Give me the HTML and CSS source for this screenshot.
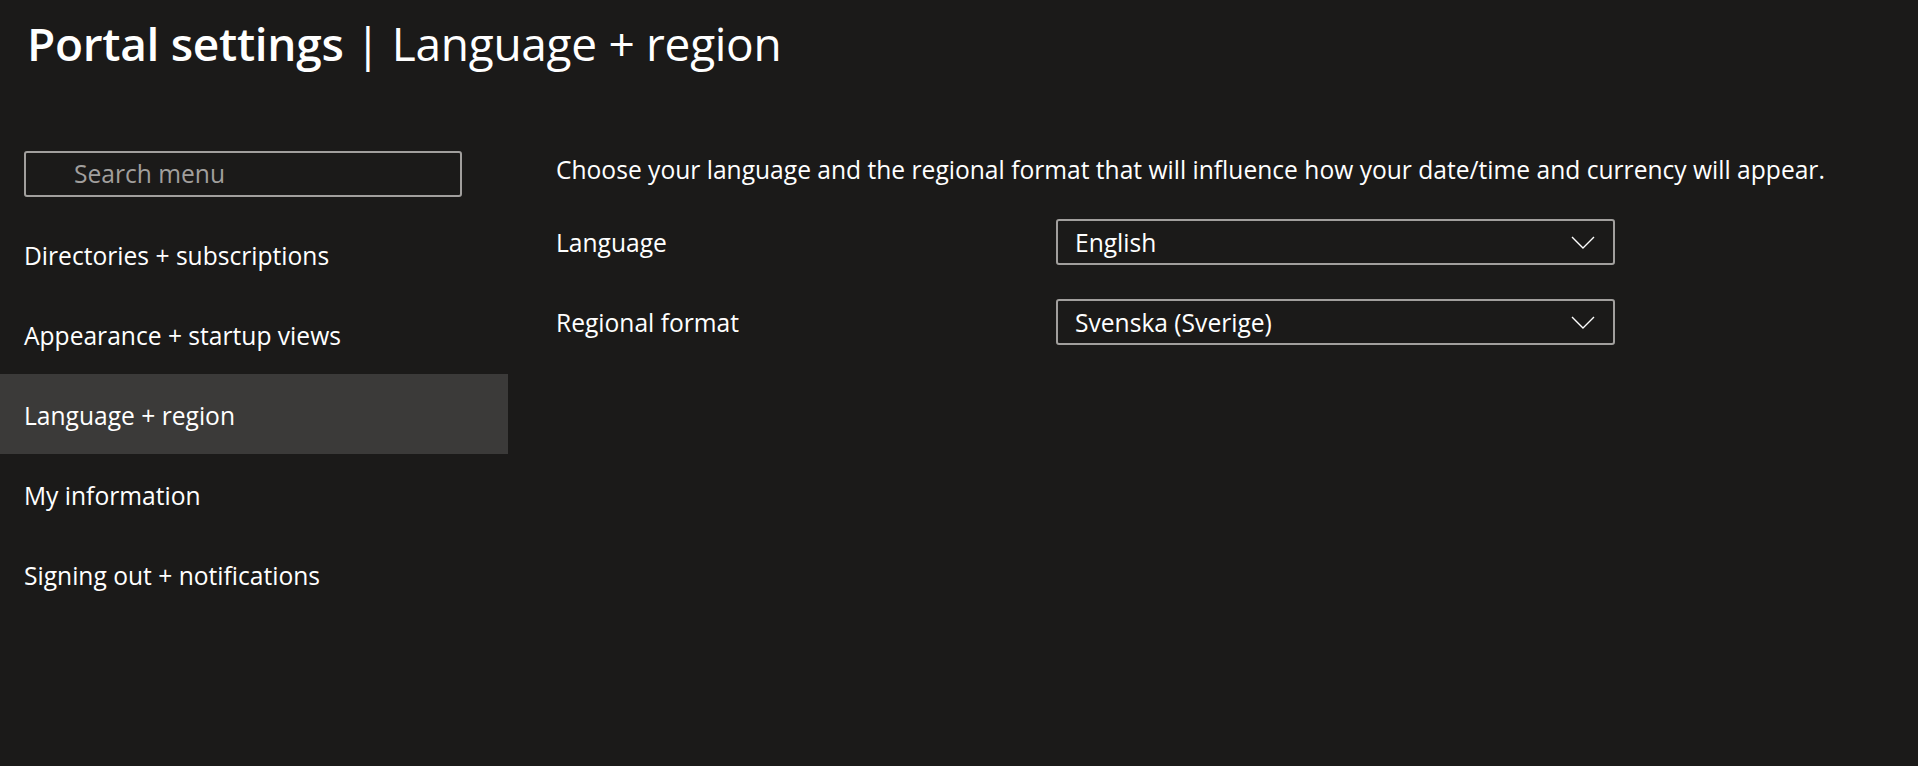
FILE: index.html
```html
<!DOCTYPE html>
<html lang="en">
<head>
  <meta charset="UTF-8">
  <title>Portal settings | Language + region</title>
  <meta name="viewport" content="width=device-width, initial-scale=1.0">
  <link rel="stylesheet" href="styles.css">
</head>
<body>
  <header class="page-header">
    <h1><span class="title-main">Portal settings</span> | Language + region</h1>
  </header>

  <div class="layout">
    <nav class="sidebar">
      <div class="search-box">
        <input type="text" placeholder="Search menu">
      </div>
      <ul class="menu">
        <li class="menu-item">Directories + subscriptions</li>
        <li class="menu-item">Appearance + startup views</li>
        <li class="menu-item active">Language + region</li>
        <li class="menu-item">My information</li>
        <li class="menu-item">Signing out + notifications</li>
      </ul>
    </nav>

    <main class="content">
      <p class="intro">Choose your language and the regional format that will influence how your date/time and currency will appear.</p>

      <div class="form-row">
        <label class="field-label">Language</label>
        <div class="dropdown">
          <span>English</span>
          <svg class="chevron" width="24" height="14" viewBox="0 0 24 14"><polyline points="1,1 12,12 23,1" fill="none" stroke="#fff" stroke-width="1.4"/></svg>
        </div>
      </div>

      <div class="form-row">
        <label class="field-label">Regional format</label>
        <div class="dropdown">
          <span>Svenska (Sverige)</span>
          <svg class="chevron" width="24" height="14" viewBox="0 0 24 14"><polyline points="1,1 12,12 23,1" fill="none" stroke="#fff" stroke-width="1.4"/></svg>
        </div>
      </div>
    </main>
  </div>
</body>
</html>
```

FILE: styles.css
```css
* { box-sizing: border-box; }
html, body {
  height: 100%;
}
body {
  margin: 0;
  font-family: "Open Sans", "Noto Sans", sans-serif;
  font-size: 24.6px;
  background: #1b1a19;
  color: #fff;
}
.page-header {
  padding: 13px 27px 0;
  height: 100px;
}
.page-header h1 {
  margin: 0;
  font-size: 46px;
  font-weight: 400;
  line-height: 60px;
  letter-spacing: -0.3px;
}
.title-main {
  font-weight: 600;
}
.layout {
  display: flex;
}
.sidebar {
  width: 508px;
  flex-shrink: 0;
  padding-top: 51px;
}
.search-box {
  margin: 0 46px 0 24px;
}
.search-box input {
  width: 100%;
  height: 46px;
  padding: 0 0 1px 48px;
  background: transparent;
  border: 2px solid #a19f9d;
  border-radius: 3px;
  color: #fff;
  font-family: inherit;
  font-size: 24.6px;
  outline: none;
}
.search-box input::placeholder {
  color: #a19f9d;
}
.menu {
  list-style: none;
  margin: 17px 0 0;
  padding: 0;
}
.menu-item {
  height: 80px;
  display: flex;
  align-items: center;
  padding: 2px 0 0 24px;
}
.menu-item.active {
  background: #3b3a39;
}
.content {
  flex: 1;
  padding: 52px 0 0 48px;
}
.intro {
  margin: 0;
  line-height: 36px;
}
.form-row {
  display: flex;
  align-items: center;
  margin-top: 31px;
}
.form-row + .form-row {
  margin-top: 34px;
}
.field-label {
  width: 500px;
}
.dropdown {
  width: 559px;
  height: 46px;
  border: 2px solid #a19f9d;
  border-radius: 3px;
  display: flex;
  align-items: center;
  justify-content: space-between;
  padding: 1px 18px 0 17px;
}
.chevron {
  display: block;
  margin-top: 1px;
}
```
